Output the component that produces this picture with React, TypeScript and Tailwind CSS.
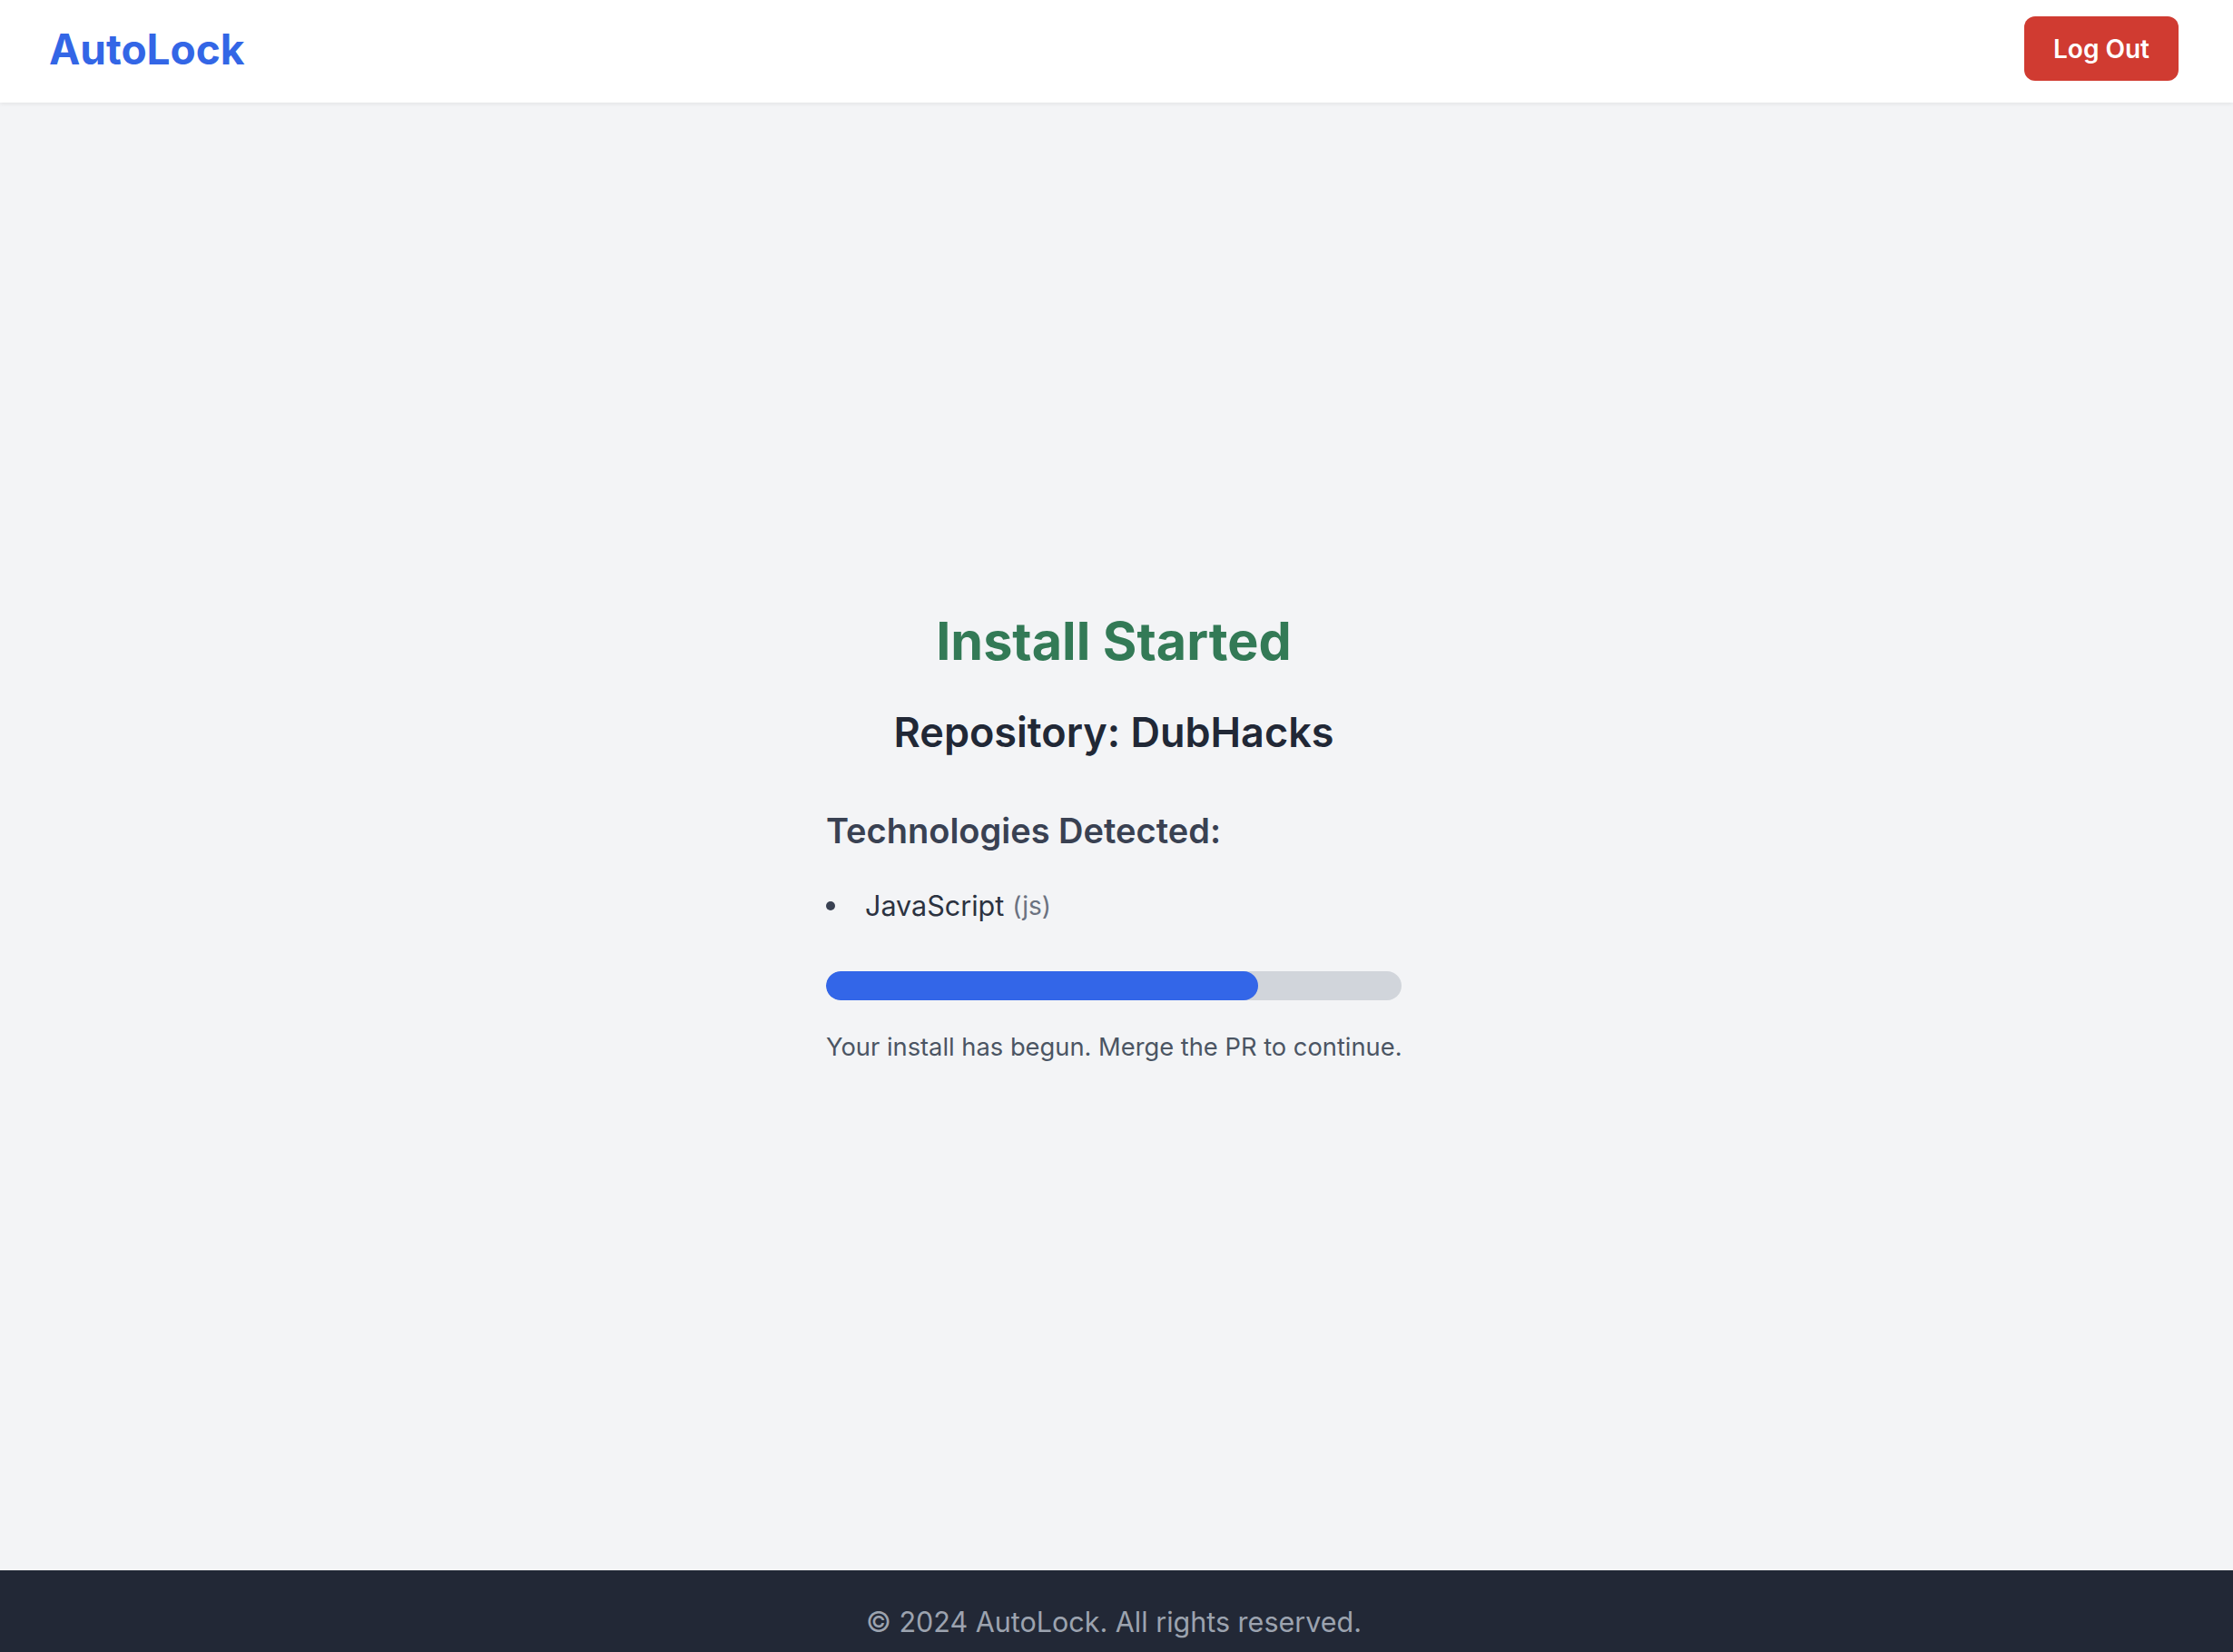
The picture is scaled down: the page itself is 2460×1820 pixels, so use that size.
import React from "react";

export default function App() {
  const progress = 75;
  return (
    <div className="min-h-screen flex flex-col bg-[#f3f4f6]" style={{ fontFamily: "Inter, 'Noto Sans', sans-serif" }}>
      <header className="h-[113px] shrink-0 bg-white shadow-[0_2px_4px_rgba(0,0,0,0.06)] flex items-center justify-between pl-[54px] pr-[60px] pb-[6px] relative z-10">
        <div className="text-[46px] font-bold leading-none text-[#3366e6]">AutoLock</div>
        <button className="h-[71px] px-[32px] rounded-[12px] bg-[#d03b31] text-white text-[28px] font-semibold leading-none">
          Log Out
        </button>
      </header>

      <main className="h-[1617px] shrink-0 flex items-center justify-center pr-[6px]">
        <div className="w-[634px] flex flex-col">
          <h1 className="text-[57.5px] leading-[72px] font-bold text-center text-[#337a56]">Install Started</h1>
          <h2 className="mt-[37px] text-[45px] leading-[56px] font-semibold text-center text-[#212836]">
            Repository: DubHacks
          </h2>
          <h3 className="mt-[56px] text-[38px] leading-[48px] font-semibold text-[#394152]">Technologies Detected:</h3>
          <ul className="mt-[35px]">
            <li className="flex items-center h-[48px]">
              <span className="w-[10px] h-[10px] rounded-full bg-[#394152] mr-[33px] shrink-0"></span>
              <span className="text-[30.5px] leading-[48px] text-[#2b3240]">JavaScript</span>
              <span className="ml-[9px] text-[28px] leading-[48px] text-[#6b7280]">(js)</span>
            </li>
          </ul>
          <div className="mt-[48px] h-[32px] w-full rounded-full bg-[#d1d5db] overflow-hidden">
            <div className="h-full rounded-full bg-[#3366e8]" style={{ width: `${progress}%` }}></div>
          </div>
          <p className="mt-[32px] text-[27.3px] leading-[40px] text-[#4b5563] whitespace-nowrap">
            Your install has begun. Merge the PR to continue.
          </p>
        </div>
      </main>

      <footer className="bg-[#222836] pt-[33px] pb-[33px] pr-[6px] text-center">
        <p className="text-[30.5px] leading-[48px] text-[#9ca3af]">© 2024 AutoLock. All rights reserved.</p>
      </footer>
    </div>
  );
}
